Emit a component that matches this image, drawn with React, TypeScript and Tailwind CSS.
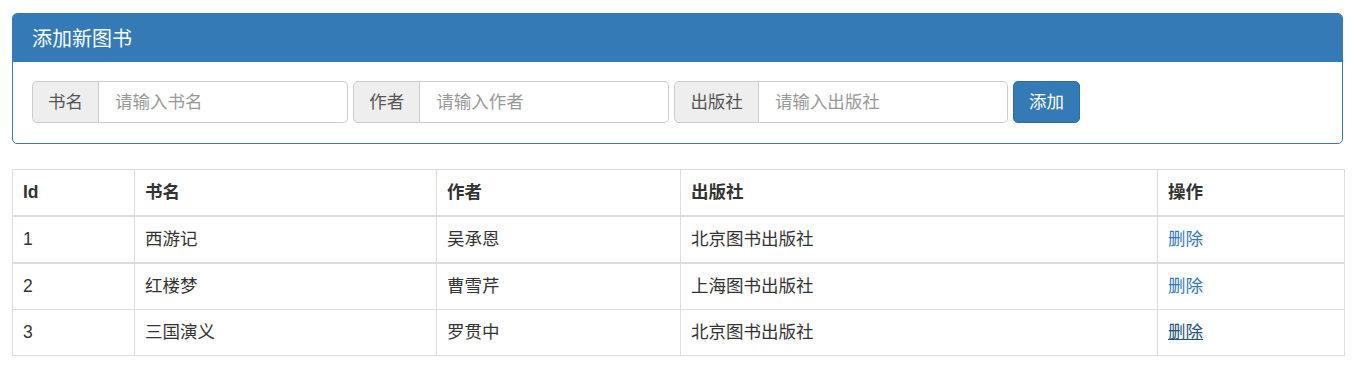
const books = [
  { id: 1, name: "西游记", author: "吴承恩", publisher: "北京图书出版社" },
  { id: 2, name: "红楼梦", author: "曹雪芹", publisher: "上海图书出版社" },
  { id: 3, name: "三国演义", author: "罗贯中", publisher: "北京图书出版社" },
]

const fields = [
  { label: "书名", placeholder: "请输入书名" },
  { label: "作者", placeholder: "请输入作者" },
  { label: "出版社", placeholder: "请输入出版社" },
]

export default function App() {
  return (
    <div className="min-h-[369px] bg-white px-[12px] pt-[13px] text-[17.5px] leading-[25px] text-[#333] font-['Liberation_Sans','Noto_Sans_CJK_SC',sans-serif]">
      {/* Add book panel */}
      <div className="rounded-[5px] border border-[#337ab7]">
        <div className="h-[48px] rounded-t-[4px] bg-[#337ab7] px-[19px] pt-[14px] text-[20px] leading-[22px] text-white">
          添加新图书
        </div>
        <div className="flex items-center gap-[5px] px-[19px] pt-[19px] pb-[20px]">
          {fields.map((f) => (
            <div key={f.label} className="flex h-[42px]">
              <span className="flex items-center rounded-l-[5px] border border-[#ccc] bg-[#eee] px-[15px] text-[#555]">
                {f.label}
              </span>
              <input
                className="h-full w-[249.2px] rounded-r-[5px] border border-l-0 border-[#ccc] px-[16px] text-[#555] outline-none placeholder:text-[#999]"
                placeholder={f.placeholder}
              />
            </div>
          ))}
          <button className="h-[42px] rounded-[5px] border border-[#2e6da4] bg-[#337ab7] px-[15px] text-white">
            添加
          </button>
        </div>
      </div>

      {/* Book list */}
      <table className="mt-[25px] w-[1332px] table-fixed border-collapse">
        <colgroup>
          <col className="w-[122px]" />
          <col className="w-[302px]" />
          <col className="w-[244px]" />
          <col className="w-[477px]" />
          <col className="w-[187px]" />
        </colgroup>
        <thead>
          <tr>
            {["Id", "书名", "作者", "出版社", "操作"].map((h) => (
              <th
                key={h}
                className="border border-b-2 border-[#ddd] px-[10px] py-[10px] text-left font-bold"
              >
                {h}
              </th>
            ))}
          </tr>
        </thead>
        <tbody>
          {books.map((b, i) => (
            <tr key={b.id} className={i === 0 ? "border-b-2 border-[#ddd]" : ""}>
              <td className="border border-[#ddd] p-[10px]">{b.id}</td>
              <td className="border border-[#ddd] p-[10px]">{b.name}</td>
              <td className="border border-[#ddd] p-[10px]">{b.author}</td>
              <td className="border border-[#ddd] p-[10px]">{b.publisher}</td>
              <td className="border border-[#ddd] p-[10px]">
                <a
                  href="#"
                  className={
                    i === 2 ? "text-[#23527c] underline" : "text-[#337ab7]"
                  }
                >
                  删除
                </a>
              </td>
            </tr>
          ))}
        </tbody>
      </table>
    </div>
  )
}
